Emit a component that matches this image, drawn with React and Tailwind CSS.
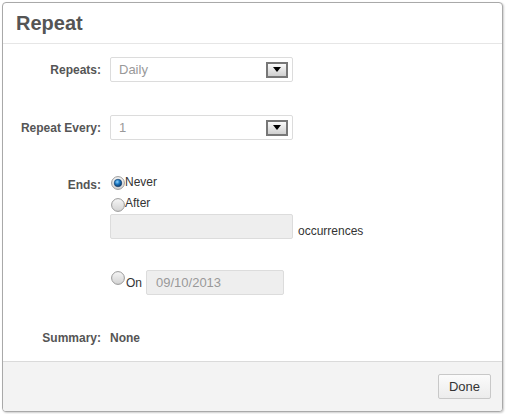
import React from "react";

function Radio({ checked }) {
  return (
    <svg width="14" height="14" viewBox="0 0 14 14" className="shrink-0">
      <defs>
        <linearGradient id={checked ? "rgc" : "rgu"} x1="0" y1="0" x2="0" y2="1">
          <stop offset="0" stopColor="#f6f6f6" />
          <stop offset="1" stopColor="#d2d2d2" />
        </linearGradient>
        <radialGradient id="dot" cx="0.4" cy="0.35" r="0.7">
          <stop offset="0" stopColor="#8fd3ff" />
          <stop offset="0.45" stopColor="#1a78c2" />
          <stop offset="1" stopColor="#0a2f5c" />
        </radialGradient>
      </defs>
      <circle cx="7" cy="7" r="6.4" fill={`url(#${checked ? "rgc" : "rgu"})`} stroke="#999" strokeWidth="1" />
      {checked && <circle cx="7" cy="7" r="3.8" fill="url(#dot)" stroke="#133a66" strokeWidth="0.6" />}
    </svg>
  );
}

function Select({ value }) {
  return (
    <div className="w-[183px] h-[25px] border border-[#dcdcdc] rounded-[2px] bg-white flex items-center justify-between pl-[8px] pr-[4px]">
      <span className="text-[13px] text-[#999]">{value}</span>
      <div className="w-[22px] h-[16px] border-2 border-[#777] bg-gradient-to-b from-[#fafafa] to-[#cfcfcf] flex items-center justify-center">
        <svg width="8" height="5" viewBox="0 0 8 5">
          <path d="M0 0 H8 L4 5 Z" fill="#000" />
        </svg>
      </div>
    </div>
  );
}

function Label({ children, className = "" }) {
  return (
    <div className={`w-[98px] shrink-0 text-right text-[12px] leading-[14px] font-bold text-[#555] ${className}`}>
      {children}
    </div>
  );
}

export default function App() {
  return (
    <div
      className="w-[506px] h-[414px] bg-white pt-[2px] pl-[2px]"
      style={{ fontFamily: '"Liberation Sans", Arial, sans-serif' }}
    >
      <div className="w-[501px] h-[410px] border border-[#a9a9a9] rounded-[4px] shadow-[1px_1px_2px_rgba(0,0,0,0.2)] flex flex-col overflow-hidden bg-white">
        <div className="h-[41px] shrink-0 border-b border-[#e6e6e6] pl-[13px] flex items-center">
          <span className="text-[20px] font-bold text-[#555] leading-none">Repeat</span>
        </div>

        <div className="flex-1 flex flex-col">
          <div className="flex items-center mt-[13px] h-[25px]">
            <Label>Repeats:</Label>
            <div className="ml-[9px]">
              <Select value="Daily" />
            </div>
          </div>

          <div className="flex items-center mt-[33px] h-[25px]">
            <Label>Repeat Every:</Label>
            <div className="ml-[9px]">
              <Select value="1" />
            </div>
          </div>

          <div className="flex mt-[35px]">
            <Label className="pt-[3px]">Ends:</Label>
            <div className="ml-[10px] flex flex-col">
              <div className="h-[21px] flex items-start">
                <div className="mt-[1px]">
                  <Radio checked />
                </div>
                <span className="text-[12px] leading-[14px] text-[#333]">Never</span>
              </div>
              <div className="h-[18px] flex items-start">
                <div className="mt-[2px]">
                  <Radio />
                </div>
                <span className="text-[12px] leading-[14px] text-[#333]">After</span>
              </div>
              <div className="flex items-end -ml-[1px]">
                <div className="w-[183px] h-[25px] bg-[#eeeeee] border border-[#dcdcdc] rounded-[2px]" />
                <span className="ml-[5px] mb-[1px] text-[12px] leading-[14px] text-[#333]">occurrences</span>
              </div>
              <div className="flex items-start mt-[31px]">
                <div className="mt-[1px]">
                  <Radio />
                </div>
                <span className="mt-[6px] ml-[1px] text-[12px] leading-[14px] text-[#333]">On</span>
                <div className="ml-[4px] w-[138px] h-[25px] bg-[#eeeeee] border border-[#dcdcdc] rounded-[2px] flex items-center pl-[9px]">
                  <span className="text-[13px] text-[#999]">09/10/2013</span>
                </div>
              </div>
            </div>
          </div>

          <div className="flex mt-[36px]">
            <Label>Summary:</Label>
            <span className="ml-[9px] text-[12px] leading-[14px] font-bold text-[#555]">None</span>
          </div>
        </div>

        <div className="h-[50px] shrink-0 border-t border-[#dadada] bg-[#f3f3f3] flex justify-end items-start pt-[12px] pr-[11px]">
          <button className="w-[53px] h-[25px] border border-[#c8c8c8] rounded-[2px] bg-gradient-to-b from-[#fbfbfb] to-[#ececec] text-[13px] text-[#333] flex items-center justify-center">
            Done
          </button>
        </div>
      </div>
    </div>
  );
}
